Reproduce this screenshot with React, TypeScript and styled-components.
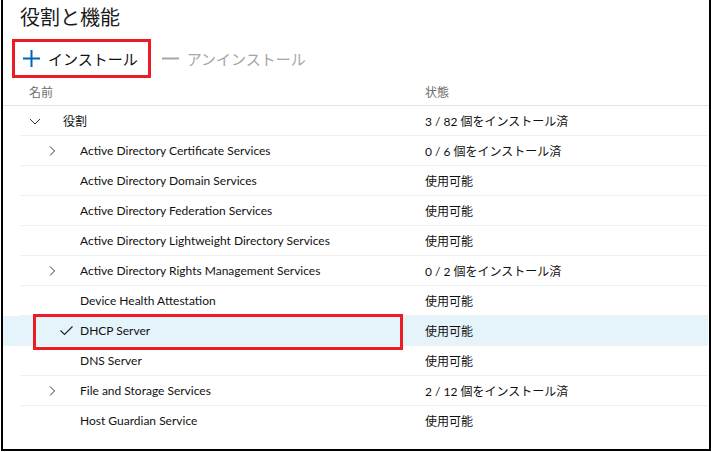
import React from 'react';
import styled, { createGlobalStyle } from 'styled-components';

const GlobalStyle = createGlobalStyle`
    html, body {
        margin: 0;
        padding: 0;
        background: #fff;
        overflow: hidden;
    }
`;

type Item = {
    name: string;
    status: string;
    level: number;
    expander?: 'open' | 'closed';
    checked?: boolean;
    selected?: boolean;
};

const items: Item[] = [
    { name: '役割', status: '3 / 82 個をインストール済', level: 0, expander: 'open' },
    { name: 'Active Directory Certificate Services', status: '0 / 6 個をインストール済', level: 1, expander: 'closed' },
    { name: 'Active Directory Domain Services', status: '使用可能', level: 1 },
    { name: 'Active Directory Federation Services', status: '使用可能', level: 1 },
    { name: 'Active Directory Lightweight Directory Services', status: '使用可能', level: 1 },
    { name: 'Active Directory Rights Management Services', status: '0 / 2 個をインストール済', level: 1, expander: 'closed' },
    { name: 'Device Health Attestation', status: '使用可能', level: 1 },
    { name: 'DHCP Server', status: '使用可能', level: 1, checked: true, selected: true },
    { name: 'DNS Server', status: '使用可能', level: 1 },
    { name: 'File and Storage Services', status: '2 / 12 個をインストール済', level: 1, expander: 'closed' },
    { name: 'Host Guardian Service', status: '使用可能', level: 1 },
];

const Chevron = ({ open }: { open: boolean }) =>
    open ? (
        <svg width="16" height="16" viewBox="0 0 16 16">
            <path d="M3 6 L8 11 L13 6" fill="none" stroke="#333" strokeWidth="1" />
        </svg>
    ) : (
        <svg width="16" height="16" viewBox="0 0 16 16">
            <path d="M6 3.5 L10.5 8 L6 12.5" fill="none" stroke="#333" strokeWidth="1" />
        </svg>
    );

const Check = () => (
    <svg width="14" height="12" viewBox="0 0 14 12">
        <path d="M0.5 5.5 L4.5 9.5 L12.5 1.5" fill="none" stroke="#222" strokeWidth="1.1" />
    </svg>
);

export default function App() {
    return (
        <>
            <GlobalStyle />
            <Frame>
                <Title>役割と機能</Title>

                <Toolbar>
                    <ToolButton $marked>
                        <svg width="17" height="17" viewBox="0 0 17 17">
                            <path d="M8.5 0 V17 M0 8.5 H17" stroke="#0067b8" strokeWidth="2" />
                        </svg>
                        インストール
                    </ToolButton>
                    <ToolButton $disabled>
                        <svg width="17" height="17" viewBox="0 0 17 17">
                            <path d="M0 8.5 H17" stroke="#a6a6a6" strokeWidth="2" />
                        </svg>
                        アンインストール
                    </ToolButton>
                </Toolbar>

                <HeaderRow>
                    <span>名前</span>
                    <span>状態</span>
                </HeaderRow>

                {items.map((item, index) => (
                    <Row key={item.name} $selected={item.selected}>
                        <RowInner $last={index === items.length - 1}>
                            <NameCell $level={item.level}>
                                <IconSlot>{item.expander && <Chevron open={item.expander === 'open'} />}</IconSlot>
                                <CheckSlot>{item.checked && <Check />}</CheckSlot>
                                {item.name}
                            </NameCell>
                            <span>{item.status}</span>
                        </RowInner>
                        {item.selected && <Marker />}
                    </Row>
                ))}
            </Frame>
        </>
    );
}

const Frame = styled.div`
    box-sizing: border-box;
    width: 710px;
    height: 451px;
    margin-left: 1px;
    border: 2px solid #000;
    border-top: none;
    background: #fff;
    overflow: hidden;
    font-family: 'Segoe UI', Lato, 'Noto Sans CJK JP', sans-serif;
    color: #111;
`;

const Title = styled.h1`
    margin: 0;
    padding: 3px 0 0 17px;
    font-family: 'Noto Sans CJK JP', sans-serif;
    font-size: 20px;
    font-weight: 400;
    line-height: 28px;
    color: #1a1a1a;
`;

const Toolbar = styled.div`
    display: flex;
    margin-top: 8px;
    padding-left: 9px;
`;

const ToolButton = styled.div<{ $marked?: boolean; $disabled?: boolean }>`
    box-sizing: border-box;
    display: flex;
    align-items: center;
    gap: 8px;
    height: 39px;
    padding: 0 10px 0 8px;
    border: 3px solid ${(p) => (p.$marked ? '#ed1c24' : 'transparent')};
    font-family: 'Noto Sans CJK JP', sans-serif;
    font-size: 15px;
    color: ${(p) => (p.$disabled ? '#a6a6a6' : '#111')};
`;

const HeaderRow = styled.div`
    box-sizing: border-box;
    display: grid;
    grid-template-columns: 396px 1fr;
    align-items: center;
    height: 28px;
    padding-left: 26px;
    border-bottom: 1px solid #e3e3e3;
    font-family: 'Noto Sans CJK JP', sans-serif;
    font-size: 12px;
    color: #6e6e6e;
`;

const Row = styled.div<{ $selected?: boolean }>`
    position: relative;
    margin-right: 1px;
    background: ${(p) => (p.$selected ? '#e5f3fb' : 'transparent')};
`;

const RowInner = styled.div<{ $last?: boolean }>`
    box-sizing: border-box;
    display: grid;
    grid-template-columns: 405px 1fr;
    align-items: center;
    height: 30px;
    margin-left: 17px;
    border-bottom: 1px solid ${(p) => (p.$last ? 'transparent' : '#efefef')};
    font-size: 12px;
`;

const NameCell = styled.div<{ $level: number }>`
    display: flex;
    align-items: center;
    padding-left: ${(p) => 7 + p.$level * 17}px;
    white-space: nowrap;
`;

const IconSlot = styled.span`
    display: flex;
    width: 16px;
    height: 16px;
`;

const CheckSlot = styled.span`
    display: flex;
    align-items: center;
    width: 20px;
`;

const Marker = styled.div`
    position: absolute;
    left: 30px;
    top: -2px;
    width: 370px;
    height: 36px;
    border: 3px solid #ed1c24;
    box-sizing: border-box;
    pointer-events: none;
`;
